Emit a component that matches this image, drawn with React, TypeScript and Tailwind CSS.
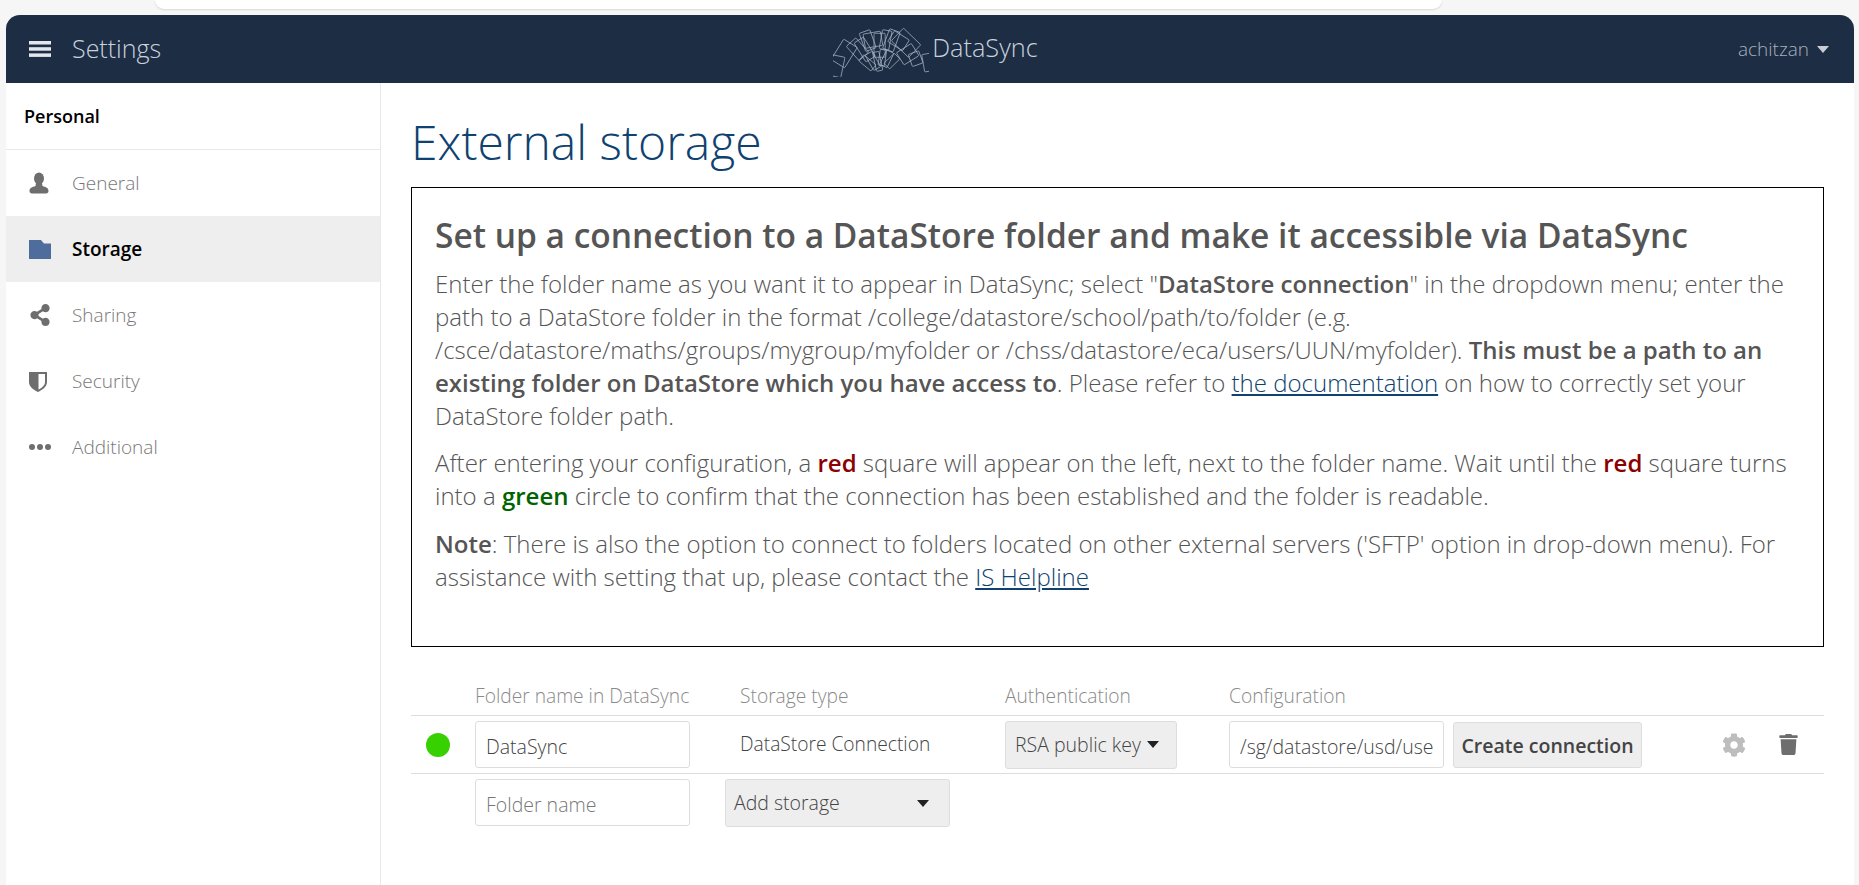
import { FaCog, FaShareAlt, FaTrash } from "react-icons/fa";

const font = { fontFamily: '"Open Sans", sans-serif' };

function Logo() {
  const rays = [
    [-78, 62, 26, 18], [-58, 58, 30, 20], [-42, 50, 16, 24], [-32, 46, 14, 28], [-20, 52, 14, 24], [-10, 48, 22, 18],
    [0, 46, 14, 30], [10, 50, 12, 24], [20, 52, 14, 26], [32, 50, 22, 16], [44, 56, 30, 22], [58, 48, 18, 22], [70, 50, 16, 14], [80, 62, 22, 12],
    [-50, 28, 10, 20], [-30, 26, 10, 22], [-12, 24, 8, 24], [8, 26, 8, 20], [26, 26, 10, 20], [46, 26, 10, 18],
  ];
  return (
    <svg width="96" height="56" viewBox="-48 -50 96 56" fill="none" stroke="#aab6c6" strokeWidth="0.7" className="shrink-0">
      {rays.map(([a, r, w, h], i) => (
        <rect key={i} x={-w / 2} y={-r * 0.82} width={w * 0.8} height={h * 0.8} rx="1" transform={`rotate(${a} 0 2)`} />
      ))}
    </svg>
  );
}

function UserIcon() {
  return (
    <svg width="20" height="22" viewBox="0 0 20 22" fill="#6e6e6e">
      <ellipse cx="10" cy="6.5" rx="5" ry="6" />
      <path d="M7 11 L13 11 L13.5 14 C17 15 19.5 16 19.5 19 C19.5 21 18 21.500 16 21.500 L4 21.500 C2 21.500 .5 21 .5 19 C.5 16 3 15 6.500 14 Z" />
    </svg>
  );
}
function FolderIcon() {
  return (
    <svg width="22" height="19" viewBox="0 0 22 19" fill="#4f6d9c">
      <path d="M0 0 L12 0 L15 3.500 L22 3.500 L22 19 L0 19 Z" />
    </svg>
  );
}
function ShieldIcon() {
  return (
    <svg width="18" height="21" viewBox="0 0 18 21" fill="#6e6e6e">
      <path fillRule="evenodd" d="M0 1 H18 V11 C18 16 13 19 9 21 C5 19 0 16 0 11 Z M9.500 3 V18.500 C12.500 17 16 14.500 16 11 V3 Z" />
    </svg>
  );
}
function DotsIcon() {
  return (
    <svg width="22" height="6" viewBox="0 0 22 6" fill="#6e6e6e">
      <circle cx="3" cy="3" r="3" />
      <circle cx="11" cy="3" r="3" />
      <circle cx="19" cy="3" r="3" />
    </svg>
  );
}

function NavItem({ icon, label, active }: { icon: React.ReactNode; label: string; active?: boolean }) {
  return (
    <div className={`flex h-[66px] items-center pl-[23px] ${active ? "bg-[#eeeeee]" : ""}`}>
      <span className="flex w-[43px] shrink-0 items-center justify-start">{icon}</span>
      <span className={`text-[19px] ${active ? "font-semibold text-black" : "font-light text-[#777777]"}`}>{label}</span>
    </div>
  );
}

const Caret = ({ color = "#222222" }: { color?: string }) => (
  <svg width="12" height="7" viewBox="0 0 12 7" fill={color} className="shrink-0">
    <path d="M0 0 H12 L6 7 Z" />
  </svg>
);

const inputBox = "rounded-[3px] border border-[#dddddd] bg-white h-[47px] flex items-center px-[10px] pt-[5px] text-[19.5px] font-light overflow-hidden whitespace-nowrap";
const grayBox = "rounded-[3px] border border-[#dddddd] bg-[#eeeeee] flex items-center text-[#444444]";

export default function App() {
  return (
    <div style={font} className="relative h-[885px] w-[1859px] overflow-hidden bg-[#f6f6f6] pl-[6px] pr-[5px] pt-[15px] text-[#555555]">
      <div className="absolute left-[155px] top-0 h-[9px] w-[1287px] rounded-b-[14px] bg-white shadow-[0_1px_2px_rgba(0,0,0,0.12)]" />
      <header className="flex h-[68px] items-center justify-between rounded-t-[14px] bg-[#1c2d44] pl-[23px] pr-[25px]">
        <div className="flex w-[400px] items-center">
          <svg width="22" height="16" viewBox="0 0 22 16" fill="#e4e8ee" className="mr-[21px] shrink-0">
            <rect width="22" height="3.500" />
            <rect y="6.200" width="22" height="3.500" />
            <rect y="12.400" width="22" height="3.500" />
          </svg>
          <span className="text-[25px] font-light text-[#c9d2dd]">Settings</span>
        </div>
        <div className="flex items-center pr-[296px]">
          <Logo />
          <span className="ml-[3px] mb-[2px] text-[25.3px] font-light text-[#c9d2dd]">DataSync</span>
        </div>
        <div className="flex items-center gap-[8px] text-[19px] font-light text-[#a9b1bc]">
          <span>achitzan</span>
          <Caret color="#c9ced5" />
        </div>
      </header>
      <div className="flex h-[802px] bg-white">
        <aside className="w-[375px] shrink-0 border-r border-[#e8e8e8]">
          <div className="flex h-[67px] items-center border-b border-[#e8e8e8] pl-[18px] text-[18px] font-semibold text-black">Personal</div>
          <NavItem icon={<UserIcon />} label="General" />
          <NavItem icon={<FolderIcon />} label="Storage" active />
          <NavItem icon={<FaShareAlt size={22} color="#6e6e6e" />} label="Sharing" />
          <NavItem icon={<ShieldIcon />} label="Security" />
          <NavItem icon={<DotsIcon />} label="Additional" />
        </aside>
        <main className="min-w-0 flex-1 pl-[30px] pr-[30px]">
          <h1 className="mt-[27px] text-[48px] font-light leading-[63px] text-[#0f4270]">External storage</h1>
          <section className="mt-[14px] h-[460px] border border-black pl-[23px] pr-[23px] pt-[25px] text-[24px] font-light leading-[33px]">
            <h2 className="text-[33.5px] font-semibold leading-[44px] text-[#555555]">Set up a connection to a DataStore folder and make it accessible via DataSync</h2>
            <p className="mt-[10px]">
              Enter the folder name as you want it to appear in DataSync; select "<b className="font-semibold">DataStore connection</b>" in the dropdown menu; enter the path to a DataStore folder in the format /college/datastore/school/path/to/folder (e.g. /csce/datastore/maths/groups/mygroup/myfolder or /chss/datastore/eca/users/UUN/myfolder). <b className="font-semibold">This must be a path to an existing folder on DataStore which you have access to</b>. Please refer to <a className="text-[#0f4270] underline">the documentation</a> on how to correctly set your DataStore folder path.
            </p>
            <p className="mt-[14px]">
              After entering your configuration, a <b className="font-semibold text-[#8b0000]">red</b> square will appear on the left, next to the folder name. Wait until the <b className="font-semibold text-[#8b0000]">red</b> square turns into a <b className="font-semibold text-[#006400]">green</b> circle to confirm that the connection has been established and the folder is readable.
            </p>
            <p className="mt-[15px]">
              <b className="font-semibold">Note</b>: There is also the option to connect to folders located on other external servers ('SFTP' option in drop-down menu). For assistance with setting that up, please contact the <a className="text-[#0f4270] underline">IS Helpline</a>
            </p>
          </section>
          <div className="mt-[34px] text-[19.2px] font-light">
            <div className="flex h-[35px] items-start border-b border-[#dddddd] pt-[1px] text-[#8a8a8a]">
              <span className="ml-[64px] w-[265px]">
                <span className="block w-[215px] overflow-hidden whitespace-nowrap">Folder name in DataSync</span>
              </span>
              <span className="w-[265px]">Storage type</span>
              <span className="w-[224px]">Authentication</span>
              <span>Configuration</span>
            </div>
            <div className="flex h-[58px] items-center border-b border-[#dddddd]">
              <span className="ml-[15px] mr-[25px] h-[24px] w-[24px] shrink-0 rounded-full bg-[#37d100]" />
              <div className={`${inputBox} w-[215px] text-[#444444]`}>DataSync</div>
              <span className="ml-[50px] w-[265px] text-[#444444]">DataStore Connection</span>
              <div className={`${grayBox} h-[48px] w-[172px] gap-[6px] px-[9px] text-[19.5px] font-light`}>
                RSA public key
                <Caret />
              </div>
              <div className={`${inputBox} ml-[52px] w-[215px] text-[#444444]`}>/sg/datastore/usd/use</div>
              <div className={`${grayBox} ml-[9px] h-[46px] w-[189px] justify-center pt-[2px] text-[19.5px] font-semibold`}>Create connection</div>
              <span className="ml-[80px] flex w-[56px] justify-start">
                <FaCog size={24} color="#bdbdbd" />
              </span>
              <FaTrash size={21} color="#6e6e6e" />
            </div>
            <div className="mt-[5px] flex items-start">
              <div className={`${inputBox} ml-[64px] w-[215px] text-[#777777]`}>Folder name</div>
              <div className={`${grayBox} ml-[35px] h-[48px] w-[225px] justify-between pl-[8px] pr-[20px] text-[19.5px] font-light`}>
                Add storage
                <Caret />
              </div>
            </div>
          </div>
        </main>
      </div>
    </div>
  );
}
